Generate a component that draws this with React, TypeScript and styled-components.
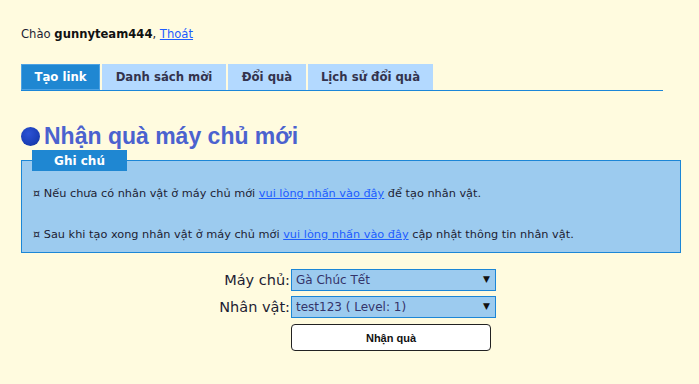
import React from "react";
import styled, { createGlobalStyle } from "styled-components";

const Global = createGlobalStyle`
  html, body { margin: 0; padding: 0; background: #fffbdf; }
  body { font-family: "DejaVu Sans", "Liberation Sans", sans-serif; color: #1d1d33; }
`;

const Page = styled.div`
  width: 699px;
  height: 384px;
  padding: 27px 0 0 21px;
  box-sizing: border-box;
  background: #fffbdf;
`;

const Greeting = styled.div`
  font-size: 11.6px;
  line-height: 14px;
  height: 14px;
  b { font-weight: bold; color: #111; }
`;

const Link = styled.a`
  color: #1d5cff;
  text-decoration: underline;
  cursor: pointer;
`;

const TabBar = styled.div`
  margin-top: 23px;
  width: 642px;
  display: flex;
  gap: 2px;
  border-bottom: 1px solid #1b86d8;
`;

const Tab = styled.div<{ $active?: boolean; $w: number }>`
  width: ${(p) => p.$w}px;
  height: 26px;
  box-sizing: border-box;
  display: flex;
  align-items: center;
  justify-content: center;
  font-size: 11.7px;
  font-weight: bold;
  background: ${(p) => (p.$active ? "#1f87d2" : "#b3d9ff")};
  color: ${(p) => (p.$active ? "#ffffff" : "#33334d")};
  border: 1px solid ${(p) => (p.$active ? "#4da2e4" : "#b3d9ff")};
`;

const Heading = styled.h1`
  margin: 33px 0 0 0;
  display: flex;
  align-items: center;
  gap: 4px;
  font-family: "Liberation Sans", sans-serif;
  font-size: 23px;
  line-height: 24px;
  font-weight: bold;
  color: #4b62cf;
`;

const Dot = styled.span`
  width: 19px;
  height: 19px;
  border-radius: 50%;
  background: radial-gradient(circle at 40% 35%, #2c52d4 0%, #1b3fb8 60%, #13308f 100%);
  flex-shrink: 0;
`;

const NoteBox = styled.fieldset`
  margin: 2px 0 0 0;
  width: 660px;
  box-sizing: border-box;
  padding: 15px 10px 0 10px;
  height: 103px;
  border: 1px solid #1c86d6;
  background: #9ccbef;
`;

const NoteLegend = styled.legend`
  padding: 0;
  width: 95px;
  height: 21px;
  display: flex;
  align-items: center;
  justify-content: center;
  background: #1f87d2;
  color: #ffffff;
  font-weight: bold;
  font-size: 12px;
`;

const NoteLine = styled.p`
  margin: 0 0 26px 0;
  padding-left: 1px;
  font-size: 11.3px;
  line-height: 15px;
  color: #1d1d33;
`;

const Form = styled.div`
  margin-top: 16px;
  display: grid;
  grid-template-columns: 269px 205px;
  column-gap: 1px;
  row-gap: 5px;
  align-items: center;
`;

const Label = styled.label`
  text-align: right;
  font-size: 14.5px;
  color: #1d1d33;
`;

const SelectWrap = styled.div`
  position: relative;
  height: 22px;
`;

const Select = styled.select`
  appearance: none;
  -webkit-appearance: none;
  width: 205px;
  height: 22px;
  margin: 0;
  padding: 0 0 0 4px;
  box-sizing: border-box;
  border: 1px solid #1c86d6;
  border-radius: 0;
  background: #9ccbef;
  font-family: "DejaVu Sans", sans-serif;
  font-size: 12px;
  color: #34346a;
  outline: none;
`;

const Arrow = styled.span`
  position: absolute;
  right: 6px;
  top: 5px;
  font-size: 9px;
  color: #111;
  pointer-events: none;
`;

const Button = styled.button`
  grid-column: 2;
  width: 200px;
  height: 27px;
  margin-top: 1px;
  background: #ffffff;
  border: 1px solid #222;
  border-radius: 4px;
  font-family: "Liberation Sans", sans-serif;
  font-weight: bold;
  font-size: 11px;
  color: #111;
`;

export default function App() {
  return (
    <>
      <Global />
      <Page>
        <Greeting>
          Chào <b>gunnyteam444</b>, <Link>Thoát</Link>
        </Greeting>
        <TabBar>
          <Tab $active $w={79}>Tạo link</Tab>
          <Tab $w={124}>Danh sách mời</Tab>
          <Tab $w={78}>Đổi quà</Tab>
          <Tab $w={125}>Lịch sử đổi quà</Tab>
        </TabBar>
        <Heading>
          <Dot />
          Nhận quà máy chủ mới
        </Heading>
        <NoteBox>
          <NoteLegend>Ghi chú</NoteLegend>
          <NoteLine>
            ¤ Nếu chưa có nhân vật ở máy chủ mới <Link>vui lòng nhấn vào đây</Link> để tạo nhân vật.
          </NoteLine>
          <NoteLine>
            ¤ Sau khi tạo xong nhân vật ở máy chủ mới <Link>vui lòng nhấn vào đây</Link> cập nhật thông tin nhân vật.
          </NoteLine>
        </NoteBox>
        <Form>
          <Label>Máy chủ:</Label>
          <SelectWrap>
            <Select defaultValue="1">
              <option value="1">Gà Chúc Tết</option>
            </Select>
            <Arrow>▼</Arrow>
          </SelectWrap>
          <Label>Nhân vật:</Label>
          <SelectWrap>
            <Select defaultValue="1">
              <option value="1">test123 ( Level: 1)</option>
            </Select>
            <Arrow>▼</Arrow>
          </SelectWrap>
          <Button>Nhận quà</Button>
        </Form>
      </Page>
    </>
  );
}
